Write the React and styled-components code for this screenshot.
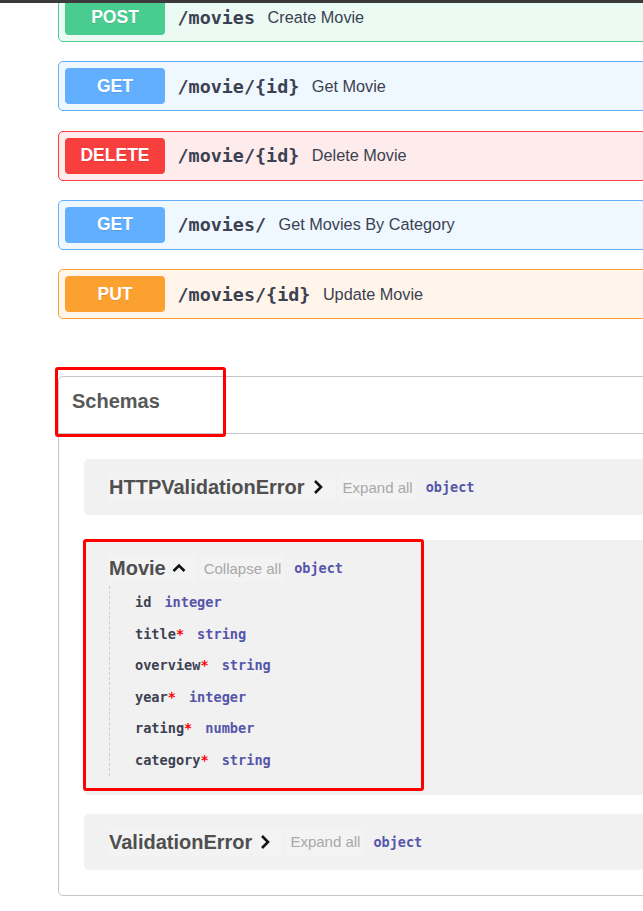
import React from "react";
import styled, { createGlobalStyle } from "styled-components";

const methodColors = {
    POST: { main: "#49cc90", tint: "rgba(73,204,144,.1)" },
    GET: { main: "#61affe", tint: "rgba(97,175,254,.1)" },
    DELETE: { main: "#f93e3e", tint: "rgba(249,62,62,.1)" },
    PUT: { main: "#fca130", tint: "rgba(252,161,48,.1)" },
};

const operations = [
    { id: 1, method: "POST", path: "/movies", summary: "Create Movie" },
    { id: 2, method: "GET", path: "/movie/{id}", summary: "Get Movie" },
    { id: 3, method: "DELETE", path: "/movie/{id}", summary: "Delete Movie" },
    { id: 4, method: "GET", path: "/movies/", summary: "Get Movies By Category" },
    { id: 5, method: "PUT", path: "/movies/{id}", summary: "Update Movie" },
];

const movieProps = [
    { name: "id", type: "integer", required: false },
    { name: "title", type: "string", required: true },
    { name: "overview", type: "string", required: true },
    { name: "year", type: "integer", required: true },
    { name: "rating", type: "number", required: true },
    { name: "category", type: "string", required: true },
];

function Chevron({ up }) {
    return (
        <ChevronIcon viewBox="0 0 20 20">
            {up ? (
                <polyline points="4.5,13 10,7.5 15.5,13" />
            ) : (
                <polyline points="7,4 13,10 7,16" />
            )}
        </ChevronIcon>
    );
}

function ModelHeader({ title, open }) {
    return (
        <TitleRow>
            <ToggleButton>
                <ModelTitle>{title}</ModelTitle>
                <Chevron up={open} />
            </ToggleButton>
            <Hint>{open ? "Collapse all" : "Expand all"}</Hint>
            <TypeTag>object</TypeTag>
        </TitleRow>
    );
}

export default function App() {
    return (
        <>
            <GlobalStyle />
            <TopBar />
            <Page>
                <OpList>
                    {operations.map(op => (
                        <OpBlock key={op.id} $color={methodColors[op.method]}>
                            <Method $color={methodColors[op.method]}>{op.method}</Method>
                            <OpPath>{op.path}</OpPath>
                            <OpSummary>{op.summary}</OpSummary>
                        </OpBlock>
                    ))}
                </OpList>

                <Section>
                    <SchemasMark />
                    <SectionHeader>Schemas</SectionHeader>
                    <SectionBody>
                        <ModelBox $after="25px">
                            <ModelHeader title="HTTPValidationError" />
                        </ModelBox>

                        <ModelBox $after="19px">
                            <MovieMark />
                            <ModelHeader title="Movie" open />
                            <PropList>
                                {movieProps.map(p => (
                                    <PropRow key={p.name}>
                                        <PropName>
                                            {p.name}
                                            {p.required && <Star>*</Star>}
                                        </PropName>
                                        <PropType>{p.type}</PropType>
                                    </PropRow>
                                ))}
                            </PropList>
                        </ModelBox>

                        <ModelBox>
                            <ModelHeader title="ValidationError" />
                        </ModelBox>
                    </SectionBody>
                </Section>
            </Page>
        </>
    );
}

const GlobalStyle = createGlobalStyle`
body {
    margin: 0;
    background: #fff;
    overflow: hidden;
    font-family: "Liberation Sans", Arial, sans-serif;
}
`;

const TopBar = styled.div`
height: 3px;
background: #3a3a3a;
`;

const Page = styled.div`
overflow: hidden;
padding-left: 58px;
height: 908px;
`;

const OpList = styled.div`
display: flex;
flex-direction: column;
gap: 19.3px;
margin-top: -11px;
`;

const OpBlock = styled.div`
display: flex;
align-items: center;
box-sizing: border-box;
width: 720px;
height: 50px;
padding: 0 6px;
border: 1px solid ${p => p.$color.main};
border-radius: 5px;
background: ${p => p.$color.tint};
`;

const Method = styled.span`
display: flex;
align-items: center;
justify-content: center;
width: 100px;
height: 36px;
border-radius: 4px;
background: ${p => p.$color.main};
color: #fff;
font-size: 17.5px;
font-weight: 700;
text-shadow: 0 1px 0 rgba(0,0,0,.1);
`;

const OpPath = styled.span`
padding: 0 12.5px;
font-family: "DejaVu Sans Mono", monospace;
font-size: 18.4px;
font-weight: 700;
color: #3b4151;
`;

const OpSummary = styled.span`
font-size: 16.25px;
color: #3b4151;
`;

const Section = styled.section`
position: relative;
width: 720px;
margin-top: 57px;
border: 1px solid rgba(59,65,81,.3);
border-radius: 5px;
`;

const SectionHeader = styled.h4`
margin: 0;
padding: 12px 13px 20px;
line-height: 24px;
font-size: 20px;
font-weight: 700;
color: #585858;
border-bottom: 1px solid rgba(59,65,81,.3);
`;

const SectionBody = styled.div`
display: flex;
flex-direction: column;
padding: 25px 25px 25px;
`;

const ModelBox = styled.div`
position: relative;
padding: 14px 25px 14px;
margin-bottom: ${p => p.$after || "0"};
border-radius: 5px;
background: #f1f1f1;
`;

const TitleRow = styled.div`
display: flex;
align-items: center;
height: 28px;
`;

const ToggleButton = styled.span`
display: flex;
align-items: center;
height: 28px;
padding: 0 8px 0 1px;
margin-left: -1px;
background: #f3f3f3;
`;

const ModelTitle = styled.span`
font-size: 20px;
font-weight: 700;
line-height: 28px;
color: #4f4f4f;
`;

const ChevronIcon = styled.svg`
width: 20px;
height: 20px;
margin-left: 3px;
fill: none;
stroke: #111;
stroke-width: 2.6;
`;

const Hint = styled.span`
display: flex;
align-items: center;
height: 28px;
margin-left: 3px;
padding: 0 3px 0 4px;
background: #f3f3f3;
font-size: 15px;
color: #a8a8a8;
`;

const TypeTag = styled.span`
margin-left: 10px;
font-family: "DejaVu Sans Mono", monospace;
font-size: 13.5px;
font-weight: 700;
color: #55a;
`;

const PropList = styled.div`
margin: 4px 0 5px;
padding-left: 25px;
border-left: 1px dashed #cfcfcf;
`;

const PropRow = styled.div`
display: flex;
align-items: center;
gap: 13px;
height: 31.6px;
font-family: "DejaVu Sans Mono", monospace;
font-size: 13.6px;
font-weight: 700;
`;

const PropName = styled.span`
color: #3b4151;
`;

const Star = styled.span`
color: #f00;
`;

const PropType = styled.span`
color: #55a;
`;

const SchemasMark = styled.div`
position: absolute;
left: -4px;
top: -10px;
width: 171px;
height: 70px;
box-sizing: border-box;
border: 3px solid #ff0000;
border-radius: 3px;
pointer-events: none;
`;

const MovieMark = styled.div`
position: absolute;
left: -1px;
top: -1px;
width: 341px;
height: 252px;
box-sizing: border-box;
border: 3px solid #ff0000;
border-radius: 3px;
pointer-events: none;
`;
